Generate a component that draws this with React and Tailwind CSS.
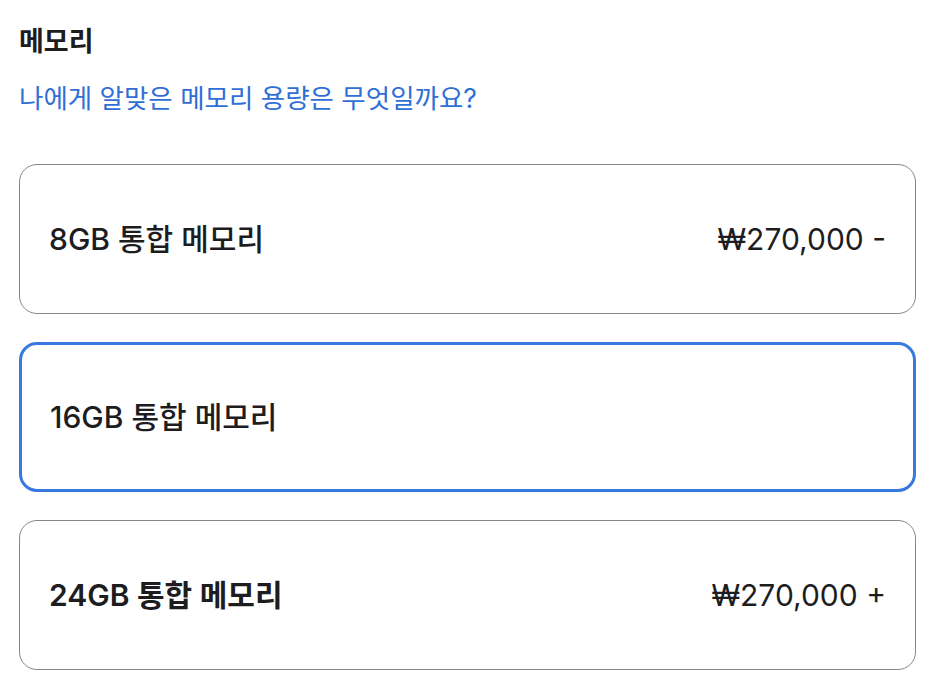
const options = [
  { id: "8gb", label: "8GB 통합 메모리", price: "₩270,000 -", weight: "font-medium", selected: false },
  { id: "16gb", label: "16GB 통합 메모리", price: "", weight: "font-medium", selected: true },
  { id: "24gb", label: "24GB 통합 메모리", price: "₩270,000 +", weight: "font-semibold", selected: false },
]

export default function App() {
  return (
    <div
      className="w-[936px] h-[698px] bg-white px-[19px] pt-[24px] text-[#1d1d1f] overflow-hidden"
      style={{ fontFamily: 'Inter, "Noto Sans CJK KR", sans-serif' }}
    >
      {/* Header */}
      <h2 className="text-[27px] leading-[36px] font-bold">메모리</h2>
      <a href="#" className="block mt-[20px] text-[26.5px] leading-[36px] text-[#2f6fd6]">
        나에게 알맞은 메모리 용량은 무엇일까요?
      </a>

      {/* Options */}
      <div className="mt-[48px] flex flex-col gap-[28px] w-[897px]">
        {options.map(opt => (
          <div
            key={opt.id}
            className={
              opt.selected
                ? "h-[150px] flex items-center justify-between rounded-[18px] border-[3px] border-[#3779df] px-[28px]"
                : "h-[150px] flex items-center justify-between rounded-[18px] border-[1.5px] border-[#86868b] px-[29px]"
            }
          >
            <span className={`text-[30px] ${opt.weight}`}>{opt.label}</span>
            {opt.price && <span className="text-[30px] text-[#1d1d1f]">{opt.price}</span>}
          </div>
        ))}
      </div>
    </div>
  )
}
